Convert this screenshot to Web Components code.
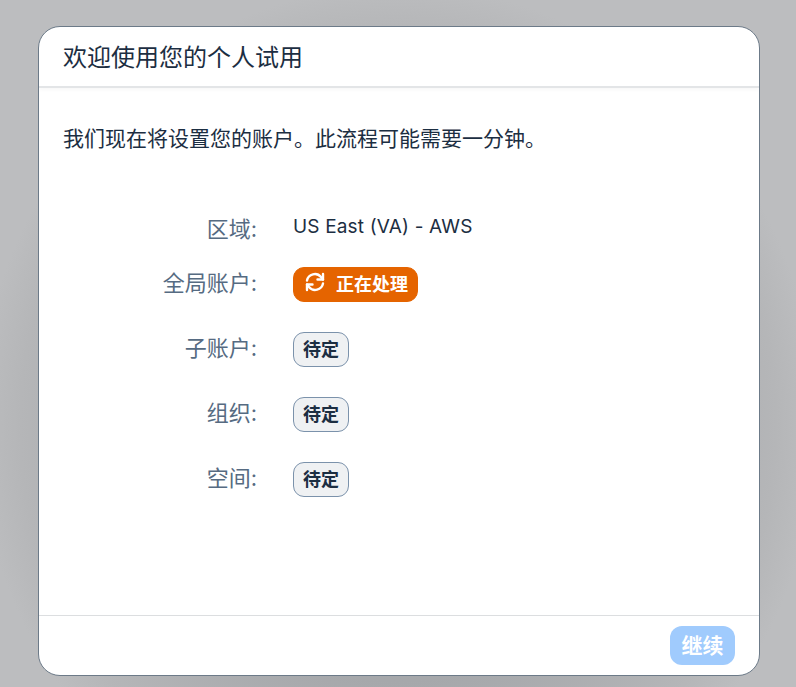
<!DOCTYPE html>
<html lang="zh">
<head>
<meta charset="utf-8">
<style>
  html, body { margin: 0; height: 100%; }
  body {
    width: 796px;
    height: 687px;
    overflow: hidden;
    background: radial-gradient(ellipse 420px 440px at 50% 62%, #9a9da1 0%, #a6a8ab 58%, #b5b6b8 90%, #bcbdbf 100%);
    font-family: Inter, "Noto Sans CJK SC", sans-serif;
  }
  .region { font-size: 19px; line-height: 24px; letter-spacing: .17px; color: #1c2e42; display: block; padding-bottom: 13px; }
</style>
</head>
<body>
<trial-dialog>
  <span slot="title">欢迎使用您的个人试用</span>
  <p slot="intro">我们现在将设置您的账户。此流程可能需要一分钟。</p>
  <setup-row plain label="区域:"><span class="region">US East (VA) - AWS</span></setup-row>
  <setup-row label="全局账户:"><status-badge kind="active">正在处理</status-badge></setup-row>
  <setup-row label="子账户:"><status-badge>待定</status-badge></setup-row>
  <setup-row label="组织:"><status-badge>待定</status-badge></setup-row>
  <setup-row label="空间:"><status-badge>待定</status-badge></setup-row>
  <action-button slot="footer">继续</action-button>
</trial-dialog>
<script>
const dialogTemplate = document.createElement('template')
dialogTemplate.innerHTML = `
<style>
  :host {
    display: flex;
    flex-direction: column;
    box-sizing: border-box;
    width: 722px;
    height: 650px;
    margin: 26px 0 0 38px;
    background: #fff;
    border: 1px solid #6c7a88;
    border-radius: 22px;
    overflow: hidden;
    color: #1c2e42;
  }
  header {
    height: 59px;
    box-sizing: content-box;
    padding-left: 24px;
    display: flex;
    align-items: center;
    font-size: 24px;
    border-bottom: 2px solid #e3e5e7;
    box-shadow: 0 2px 4px rgba(0,0,0,.03);
  }
  header slot { display: block; padding-bottom: 3px; }
  main { flex: 1; padding: 0 24px; }
  ::slotted(p) {
    margin: 34px 0 31px;
    font-size: 21px;
    line-height: 34px;
  }
  .rows { display: flex; flex-direction: column; }
  footer {
    height: 60px;
    box-sizing: border-box;
    border-top: 1px solid #dcdee0;
    padding: 10px 24px;
    display: flex;
    justify-content: flex-end;
  }
</style>
<header><slot name="title"></slot></header>
<main>
  <slot name="intro"></slot>
  <div class="rows"><slot></slot></div>
</main>
<footer><slot name="footer"></slot></footer>
`
class TrialDialog extends HTMLElement {
  constructor() {
    super()
    this.attachShadow({mode: 'open'})
    this.shadowRoot.appendChild(dialogTemplate.content.cloneNode(true))
  }
}
customElements.define('trial-dialog', TrialDialog)

const rowTemplate = document.createElement('template')
rowTemplate.innerHTML = `
<style>
  :host {
    display: grid;
    grid-template-columns: 194px 1fr;
    column-gap: 36px;
    align-items: center;
    height: 65px;
  }
  :host([plain]) { align-items: end; }
  .label {
    text-align: right;
    font-size: 22px;
    line-height: 30px;
    padding-bottom: 3px;
    color: #566b82;
  }
  :host([plain]) .label { padding-bottom: 8px; }
</style>
<div class="label"></div>
<div><slot></slot></div>
`
class SetupRow extends HTMLElement {
  constructor() {
    super()
    this.attachShadow({mode: 'open'})
    this.shadowRoot.appendChild(rowTemplate.content.cloneNode(true))
    this.shadowRoot.querySelector('.label').textContent = this.getAttribute('label')
  }
}
customElements.define('setup-row', SetupRow)

const badgeTemplate = document.createElement('template')
badgeTemplate.innerHTML = `
<style>
  :host {
    display: inline-flex;
    align-items: center;
    box-sizing: border-box;
    height: 35px;
    padding: 0 9px 3px;
    gap: 9px;
    font-size: 18px;
    font-weight: 700;
    color: #1c2e42;
    background: #eff1f3;
    border: 1px solid #7b92ab;
    border-radius: 11px;
    vertical-align: middle;
  }
  :host([kind="active"]) {
    background: #e56400;
    border-color: #e56400;
    color: #fff;
  }
  svg { display: none; width: 22px; height: 22px; margin: 0 1px 2px; }
  :host([kind="active"]) svg { display: block; }
</style>
<svg viewBox="0 0 22 22" fill="none" stroke="currentColor" stroke-width="2.4" stroke-linecap="round" stroke-linejoin="round">
  <path d="M3 9.5A8 8 0 0 1 17 6l2 2.5"/>
  <path d="M19 3v5.5h-5.5" />
  <path d="M19 12.5A8 8 0 0 1 5 16l-2-2.5"/>
  <path d="M3 19v-5.5h5.5"/>
</svg>
<slot></slot>
`
class StatusBadge extends HTMLElement {
  constructor() {
    super()
    this.attachShadow({mode: 'open'})
    this.shadowRoot.appendChild(badgeTemplate.content.cloneNode(true))
  }
}
customElements.define('status-badge', StatusBadge)

const buttonTemplate = document.createElement('template')
buttonTemplate.innerHTML = `
<style>
  :host {
    display: inline-flex;
    align-items: center;
    justify-content: center;
    box-sizing: border-box;
    width: 65px;
    height: 39px;
    padding-bottom: 3px;
    border-radius: 12px;
    background: #a0cbfd;
    color: #fff;
    font-size: 21px;
    font-weight: 700;
  }
</style>
<slot></slot>
`
class ActionButton extends HTMLElement {
  constructor() {
    super()
    this.attachShadow({mode: 'open'})
    this.shadowRoot.appendChild(buttonTemplate.content.cloneNode(true))
  }
}
customElements.define('action-button', ActionButton)
</script>
</body>
</html>
